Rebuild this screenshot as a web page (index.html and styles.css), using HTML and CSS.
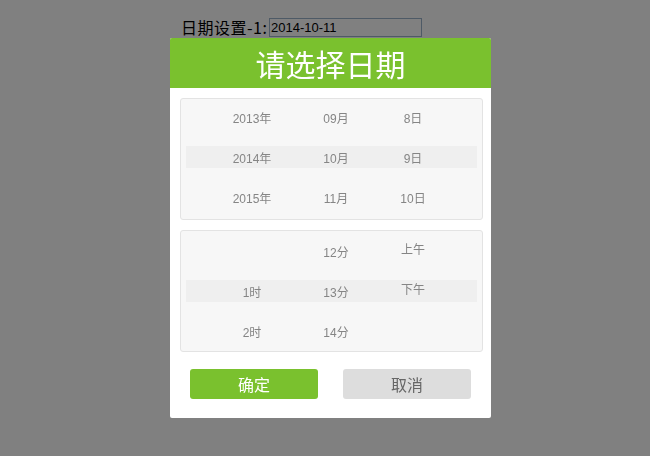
FILE: index.html
```html
<!DOCTYPE html>
<html lang="zh-CN">

<head>
    <meta charset="UTF-8">
    <meta name="viewport" content="width=device-width, initial-scale=1.0">
    <title>日期设置</title>
    <link rel="stylesheet" href="styles.css">
</head>

<body>
    <div class="field-row">
        <label for="date-1">日期设置-1:</label>
        <input type="text" id="date-1" value="2014-10-11">
    </div>

    <div class="mask">
        <div class="picker">
            <div class="picker-title">请选择日期</div>

            <div class="wheel-box">
                <div class="wheel-row">
                    <span>2013年</span><span>09月</span><span>8日</span>
                </div>
                <div class="wheel-row current">
                    <span>2014年</span><span>10月</span><span>9日</span>
                </div>
                <div class="wheel-row">
                    <span>2015年</span><span>11月</span><span>10日</span>
                </div>
            </div>

            <div class="wheel-box time-box">
                <div class="wheel-row">
                    <span></span><span>12分</span><span class="ampm">上午</span>
                </div>
                <div class="wheel-row current">
                    <span>1时</span><span>13分</span><span class="ampm">下午</span>
                </div>
                <div class="wheel-row">
                    <span>2时</span><span>14分</span><span class="ampm"></span>
                </div>
            </div>

            <div class="picker-buttons">
                <button class="btn-ok">确定</button>
                <button class="btn-cancel">取消</button>
            </div>
        </div>
    </div>
</body>

</html>
```

FILE: styles.css
```css
* {
    margin: 0;
    padding: 0;
    box-sizing: border-box;
}

body {
    height: 100vh;
    background-color: #808080;
    font-family: "Liberation Sans", "Noto Sans CJK SC", sans-serif;
}

.field-row {
    display: flex;
    align-items: center;
    padding: 18px 0 0 181px;
    height: 37px;
}

.field-row label {
    width: 88px;
    font-family: "Noto Sans CJK SC", sans-serif;
    font-size: 16px;
    letter-spacing: 0.5px;
    line-height: 19px;
    color: #000;
}

.field-row input {
    width: 153px;
    height: 19px;
    padding: 0 1px;
    border: 1px solid #4e5a66;
    background: transparent;
    font-family: "Liberation Sans", sans-serif;
    font-size: 13px;
    color: #000;
}

/* modal layer */
.mask {
    position: fixed;
    top: 0;
    left: 0;
    right: 0;
    bottom: 0;
    display: flex;
    align-items: center;
    justify-content: center;
    padding-left: 11px;
}

.picker {
    width: 321px;
    height: 380px;
    background-color: #fff;
    border-radius: 2px;
    overflow: hidden;
}

.picker-title {
    height: 50px;
    line-height: 50px;
    background-color: #7ac12e;
    color: #fff;
    text-align: center;
    font-family: "Noto Sans CJK SC", sans-serif;
    font-size: 30px;
}

.wheel-box {
    display: flex;
    flex-direction: column;
    gap: 18px;
    margin: 10px 8px 0 10px;
    padding: 7px 0 11px;
    background-color: #f7f7f7;
    border: 1px solid #e3e3e3;
    border-radius: 3px;
}

.time-box {
    margin-top: 10px;
    padding: 9px 0 9px;
}

.wheel-row {
    display: grid;
    grid-template-columns: 80px 88px 66px;
    align-items: center;
    height: 22px;
    margin: 0 5px;
    padding-left: 26px;
    text-align: center;
    font-family: "Liberation Sans", "Noto Sans CJK SC", sans-serif;
    font-size: 12px;
    color: #858585;
}

.wheel-row.current {
    background-color: #efefef;
}

.ampm {
    padding-bottom: 6px;
}

.picker-buttons {
    display: flex;
    justify-content: space-between;
    padding: 0 20px;
    margin-top: 17px;
}

.picker-buttons button {
    width: 128px;
    height: 30px;
    border: none;
    border-radius: 3px;
    font-family: "Noto Sans CJK SC", sans-serif;
    font-size: 16px;
    cursor: pointer;
}

.btn-ok {
    background-color: #7ac12e;
    color: #fff;
}

.btn-cancel {
    background-color: #dddddd;
    color: #666;
}
```
